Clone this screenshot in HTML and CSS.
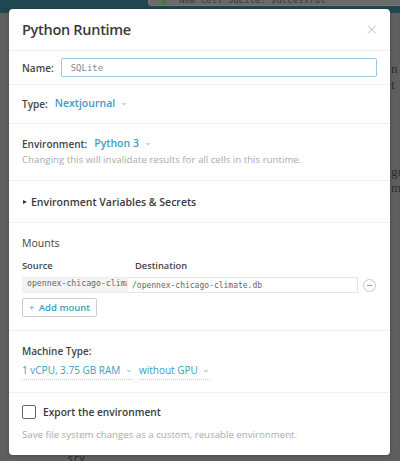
FILE: index.html
```html
<!DOCTYPE html>
<html lang="en">
<head>
    <meta charset="UTF-8">
    <meta name="viewport" content="width=device-width, initial-scale=1.0">
    <title>Python Runtime</title>
    <link rel="stylesheet" href="styles.css">
</head>
<body>
    <div class="topbar"></div>
    <div class="toast"><span class="dot"></span>New cell SQLite: successful</div>
    <div class="backdrop-text t1">n t</div>
    <div class="backdrop-text t2">gu</div>
    <div class="backdrop-text t3">m</div>
    <div class="backdrop-text t4">srv</div>

    <div class="modal">
        <div class="modal-head">
            <h2>Python Runtime</h2>
            <span class="close">&times;</span>
        </div>

        <div class="section name-row row">
            <label class="label">Name:</label>
            <input class="name-input" type="text" value="SQLite">
        </div>

        <div class="section type-row row">
            <span class="label">Type:</span>
            <span class="select">Nextjournal <span class="chev">&#8964;</span></span>
        </div>

        <div class="section env">
            <div class="row">
                <span class="label">Environment:</span>
                <span class="select">Python 3 <span class="chev">&#8964;</span></span>
            </div>
            <p class="help">Changing this will invalidate results for all cells in this runtime.</p>
        </div>

        <div class="section vars">
            <div class="toggle"><span class="tri"></span>Environment Variables &amp; Secrets</div>
        </div>

        <div class="section mounts">
            <h3>Mounts</h3>
            <div class="mount-head">
                <span class="col-src">Source</span>
                <span>Destination</span>
            </div>
            <div class="mount-row">
                <div class="mount-src">opennex-chicago-climate.db</div>
                <input class="mount-dest" type="text" value="/opennex-chicago-climate.db">
                <span class="remove"></span>
            </div>
            <button class="add-btn"><span class="plus">+</span> Add mount</button>
        </div>

        <div class="section machine-sec">
            <div class="label">Machine Type:</div>
            <div class="machine">
                <span class="select dotted">1 vCPU, 3.75 GB RAM <span class="chev">&#8964;</span></span>
                <span class="select dotted">without GPU <span class="chev">&#8964;</span></span>
            </div>
        </div>

        <div class="section export">
            <label class="check"><span class="box"></span>Export the environment</label>
            <p class="help">Save file system changes as a custom, reusable environment.</p>
        </div>
    </div>
</body>
</html>
```

FILE: styles.css
```css
body { margin: 0; background: #5f5f5f; font-family: 'Open Sans', sans-serif; color: #333; height: 461px; overflow: hidden; position: relative; }
.topbar { height: 13px; background: #1e4750; }
.toast { position: absolute; left: 148px; top: -9px; width: 260px; height: 15px; background: #6a6a6a; border: 1px solid #777; border-radius: 3px; font: 9px 'DejaVu Sans Mono', monospace; color: #3a3a3a; padding-left: 30px; box-sizing: border-box; line-height: 16px; }
.toast .dot { position: absolute; left: 13px; top: 8px; width: 5px; height: 5px; border-radius: 50%; background: #3d7a3d; }
.backdrop-text { position: absolute; font-family: 'Liberation Serif', serif; font-size: 13px; color: #2d2d2d; }
.t1 { left: 391px; top: 61px; }
.t2 { left: 391px; top: 164px; }
.t3 { left: 391px; top: 180px; }
.t4 { left: 67px; top: 453px; font-family: 'DejaVu Sans Mono', monospace; font-size: 10px; }

.modal { position: relative; margin: -4px 10px 0 9px; width: 381px; background: #fff; border-radius: 4px; box-shadow: 0 1px 4px rgba(0,0,0,0.2); }
.modal-head { display: flex; justify-content: space-between; align-items: center; height: 41px; padding: 0 13px; border-bottom: 1px solid #efefef; }
h2 { margin: 0; font-size: 14.5px; font-weight: 600; color: #3a3a3a; letter-spacing: -0.3px; }
.close { font-size: 19px; color: #c4c4c4; font-weight: 300; margin-top: -2px; }

.section { padding: 12px 13px; border-bottom: 1px solid #f0f0f0; font-size: 10px; line-height: 14px; }
.name-row { padding: 7px 13px; }
.type-row { padding: 11px 13px 12px; }
.env { padding: 12px 13px 13px; }
.vars { padding: 14px 13px 13px; }
.mounts { padding: 13px 13px 13px; }
.machine-sec { padding: 13px 13px 12px; }
.export { padding: 12px 13px 13px; border-bottom: none; }
.row { display: flex; align-items: center; }
.label { font-weight: 600; color: #444; margin-right: 7px; }
.name-input { flex: 1; height: 19px; box-sizing: border-box; border: 1px solid #9ccbe0; border-radius: 2px; font: 9px 'DejaVu Sans Mono', monospace; color: #888; padding: 0 9px; outline: none; }
.select { color: #3c9cc4; font-weight: 600; font-size: 10.5px; }
.chev { color: #9bc; font-size: 9px; font-weight: 400; margin-left: 2px; position: relative; top: -2px; }
.help { margin: 2px 0 0; color: #aaa; font-size: 9.7px; }
.toggle { font-weight: 600; font-size: 10.5px; color: #3a3a3a; display: flex; align-items: center; }
.tri { width: 0; height: 0; border-left: 4px solid #333; border-top: 2.5px solid transparent; border-bottom: 2.5px solid transparent; margin: 0 4px 0 1px; }
h3 { margin: 0 0 10px; font-size: 10.5px; line-height: 14px; font-weight: 500; color: #444; }
.mount-head { display: flex; font-weight: 600; color: #444; font-size: 9.3px; line-height: 12px; margin-bottom: 5px; }
.col-src { width: 113px; }
.mount-row { display: flex; align-items: center; }
.mount-src { width: 106px; height: 16px; line-height: 15px; background: #f4f4f4; border: 1px solid #eee; box-sizing: border-box; font: 8.2px 'DejaVu Sans Mono', monospace; color: #666; padding-left: 4px; white-space: nowrap; overflow: hidden; }
.mount-dest { width: 230px; height: 16px; box-sizing: border-box; border: 1px solid #e4e4e4; border-left: none; font: 8px 'DejaVu Sans Mono', monospace; color: #666; padding: 0 4px; outline: none; }
.remove { position: relative; width: 13px; height: 13px; box-sizing: border-box; border: 1px solid #c8c8c8; border-radius: 50%; margin-left: 5px; }
.remove::after { content: ""; position: absolute; left: 3px; top: 5px; width: 5px; height: 1px; background: #6ab0d0; }
.add-btn { display: block; margin-top: 5px; height: 19px; width: 75px; border: 1px solid #ccc; border-radius: 2px; background: #fff; color: #3c9cc4; font: 600 9.5px 'Open Sans', sans-serif; padding: 0; }
.plus { font-weight: 400; margin-right: 2px; }
.machine { display: flex; gap: 6px; margin-top: 5px; }
.dotted { font-weight: 400; font-size: 10px; border-bottom: 1px dotted #ccc; padding-bottom: 1px; }
.check { display: flex; align-items: center; font-weight: 600; color: #3a3a3a; font-size: 10.2px; }
.box { width: 14px; height: 14px; box-sizing: border-box; border: 1.5px solid #666; border-radius: 2px; margin-right: 7px; }
.export .help { margin-top: 9px; }
```
